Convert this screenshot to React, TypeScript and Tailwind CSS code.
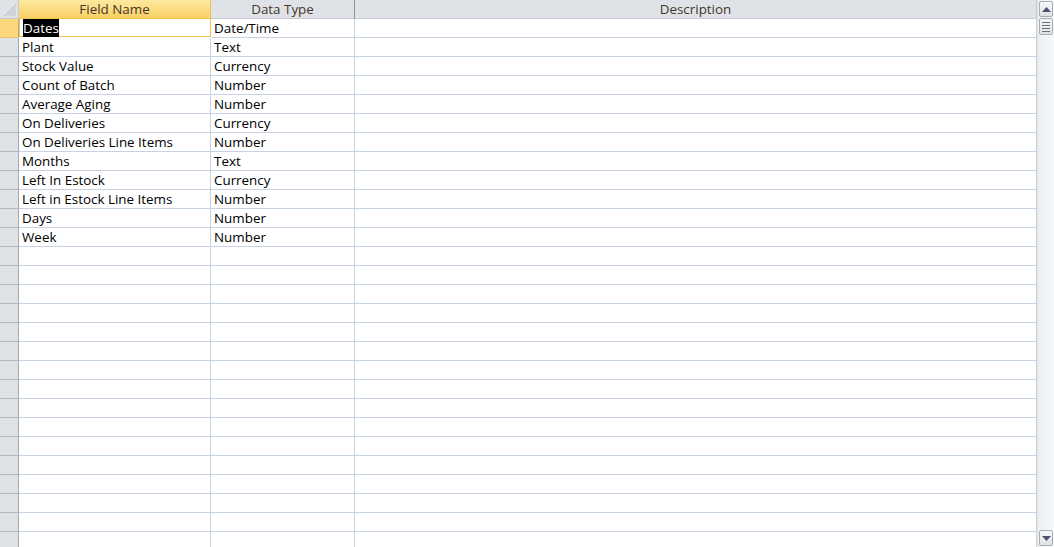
import React from "react";

const fields: [string, string][] = [
  ["Dates", "Date/Time"],
  ["Plant", "Text"],
  ["Stock Value", "Currency"],
  ["Count of Batch", "Number"],
  ["Average Aging", "Number"],
  ["On Deliveries", "Currency"],
  ["On Deliveries Line Items", "Number"],
  ["Months", "Text"],
  ["Left In Estock", "Currency"],
  ["Left in Estock Line Items", "Number"],
  ["Days", "Number"],
  ["Week", "Number"],
];

const rows: [string, string][] = [...fields, ...Array.from({ length: 16 }, () => ["", ""] as [string, string])];

function Row({ name, type, index }: { name: string; type: string; index: number }) {
  const current = index === 0;
  return (
    <div className="flex h-[19px] shrink-0">
      <div
        className={`w-[19px] shrink-0 border-r border-r-[#a4a8ad] border-b ${
          current ? "bg-[#fcd87c] border-b-[#e8c26a]" : "bg-[#dfe3e8] border-b-[#b3b7bc]"
        }`}
      />
      <div
        className={`w-[192px] shrink-0 pl-[3px] leading-[18px] ${
          current
            ? "border border-[#f3c44a] -mt-px h-[19px] leading-[17px] pl-[2px]"
            : "border-r border-b border-[#c8d3e2]"
        }`}
      >
        {current ? <span className="bg-black text-white">{name}</span> : name}
      </div>
      <div className="w-[144px] shrink-0 border-r border-b border-[#c8d3e2] pl-[3px] leading-[18px]">{type}</div>
      <div className="flex-1 border-r border-b border-[#c8d3e2]" />
    </div>
  );
}

export default function App() {
  return (
    <div
      className="flex h-[547px] w-[1054px] overflow-hidden bg-white text-[13.4px] text-black"
      style={{ fontFamily: '"Open Sans", "Liberation Sans", sans-serif' }}
    >
      <div className="flex min-w-0 flex-1 flex-col">
        {/* header */}
        <div className="flex h-[19px] shrink-0 text-[#46362a] leading-[18px]">
          <div className="relative w-[19px] shrink-0 border-r border-b border-[#c7ccd2] bg-[#dfe3e8]">
            <svg className="absolute bottom-[2px] right-[2px]" width="12" height="12" viewBox="0 0 12 12">
              <path d="M12 0 L12 12 L0 12 Z" fill="#d0d5dc" />
              <path d="M12 0 L0 12" stroke="#c2c8d0" strokeWidth="1" />
            </svg>
          </div>
          <div className="w-[192px] shrink-0 border-r border-b border-[#e8c060] bg-gradient-to-b from-[#fde99f] to-[#f9d063] text-center">
            Field Name
          </div>
          <div className="w-[144px] shrink-0 border-r border-r-[#8e9297] border-b border-b-[#c7ccd2] bg-[#dfe3e8] text-center">
            Data Type
          </div>
          <div className="flex-1 border-r border-r-[#c7ccd2] border-b border-b-[#c7ccd2] bg-[#dfe3e8] text-center">
            Description
          </div>
        </div>
        {rows.map(([n, t], i) => (
          <Row key={i} name={n} type={t} index={i} />
        ))}
      </div>
      {/* scrollbar */}
      <div className="flex w-[17px] shrink-0 flex-col border-l border-[#e3e3e3] bg-gradient-to-r from-[#eceff2] to-[#f7f8fa] px-px py-px">
        <div className="flex h-[16px] items-center justify-center rounded-[2px] border border-[#a9adb2] bg-gradient-to-b from-[#f7f8f9] to-[#dde1e6]">
          <svg width="9" height="5" viewBox="0 0 9 5">
            <path d="M0 5 L4.5 0 L9 5 Z" fill="#4a5470" />
          </svg>
        </div>
        <div className="mt-px flex h-[17px] flex-col items-center justify-center gap-[2px] rounded-[2px] border border-[#a9adb2] bg-gradient-to-b from-[#f4f5f7] to-[#dde1e6]">
          <div className="h-px w-[8px] bg-[#6c717a]" />
          <div className="h-px w-[8px] bg-[#6c717a]" />
          <div className="h-px w-[8px] bg-[#6c717a]" />
          <div className="h-px w-[8px] bg-[#6c717a]" />
        </div>
        <div className="flex-1" />
        <div className="flex h-[16px] items-center justify-center rounded-[2px] border border-[#a9adb2] bg-gradient-to-b from-[#f7f8f9] to-[#dde1e6]">
          <svg width="9" height="5" viewBox="0 0 9 5">
            <path d="M0 0 L4.5 5 L9 0 Z" fill="#4a5470" />
          </svg>
        </div>
      </div>
    </div>
  );
}
